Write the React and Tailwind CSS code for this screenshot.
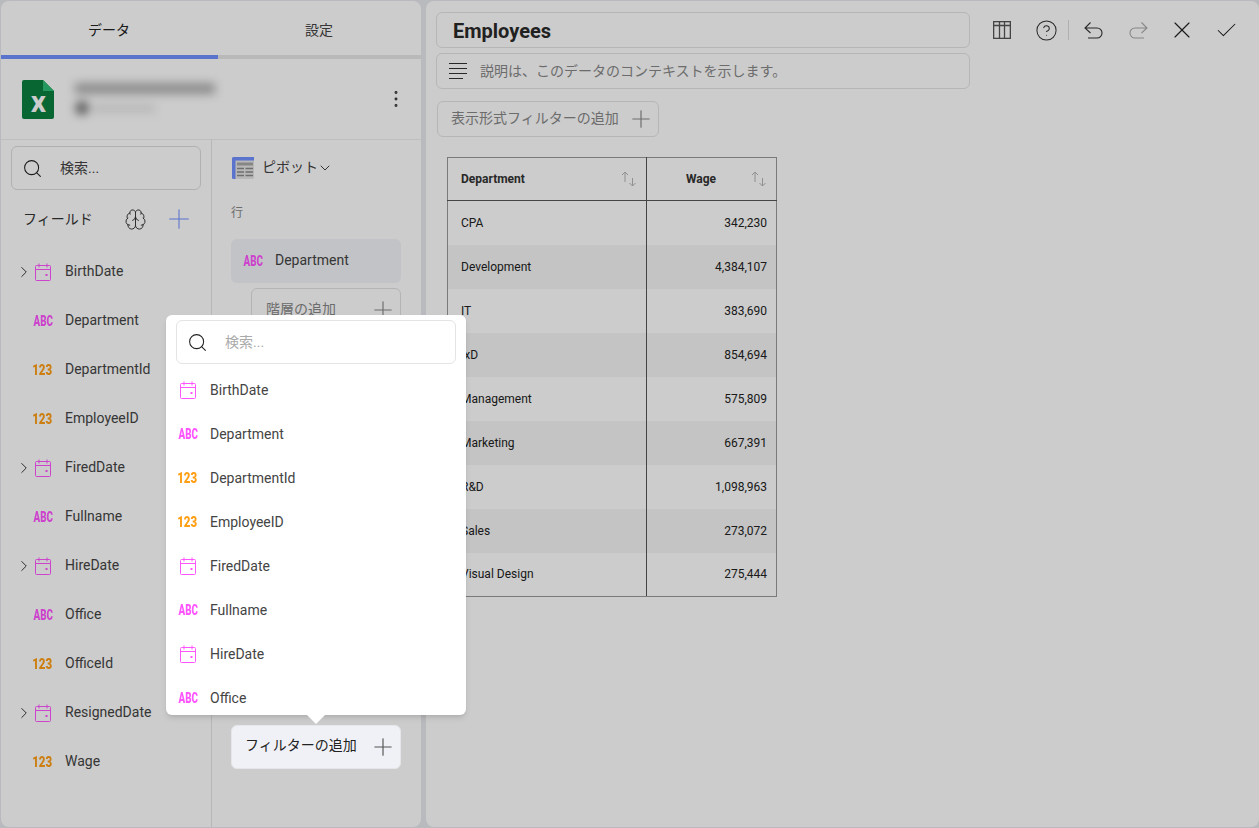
import React from 'react';
import { Search, Plus, ChevronRight, ChevronDown, X, Check, CircleHelp, EllipsisVertical, Brain } from 'lucide-react';

const fields = [
  { name: 'BirthDate', type: 'date' },
  { name: 'Department', type: 'abc' },
  { name: 'DepartmentId', type: 'num' },
  { name: 'EmployeeID', type: 'num' },
  { name: 'FiredDate', type: 'date' },
  { name: 'Fullname', type: 'abc' },
  { name: 'HireDate', type: 'date' },
  { name: 'Office', type: 'abc' },
  { name: 'OfficeId', type: 'num' },
  { name: 'ResignedDate', type: 'date' },
  { name: 'Wage', type: 'num' },
];

const rows = [
  ['CPA', '342,230'],
  ['Development', '4,384,107'],
  ['IT', '383,690'],
  ['IxD', '854,694'],
  ['Management', '575,809'],
  ['Marketing', '667,391'],
  ['R&D', '1,098,963'],
  ['Sales', '273,072'],
  ['Visual Design', '275,444'],
];

function CalendarIcon() {
  return (
    <svg width="18" height="18" viewBox="0 0 18 18" fill="none" stroke="#ff55ff" strokeWidth="1">
      <rect x="1.5" y="2.5" width="15" height="15" rx="1" />
      <path d="M1.5 6.5h15M5 0.5v4M13 0.5v4" />
      <rect x="11.5" y="11" width="2" height="2" fill="#ff55ff" stroke="none" />
    </svg>
  );
}

function TypeIcon({ type }) {
  if (type === 'date') return <CalendarIcon />;
  return (
    <span className={`inline-block w-[24px] -ml-[2px] text-center text-[14px] leading-none font-black ${type === 'abc' ? 'text-[#ff55ff] scale-x-[.7]' : 'text-[#ff9f14] scale-x-[.82]'}`}>
      {type === 'abc' ? 'ABC' : '123'}
    </span>
  );
}

function SortIcon() {
  return (
    <svg width="16" height="16" viewBox="0 0 16 16" fill="none" stroke="#b4b4b4" strokeWidth="1">
      <path d="M4 11V1M1 4L4 1L7 4M11.5 7v8M8.5 12L11.5 15L14.5 12" />
    </svg>
  );
}

function ExcelLogo() {
  return (
    <svg width="32" height="39" viewBox="0 0 32 39">
      <path d="M2 0H21L32 11V37a2 2 0 0 1-2 2H2a2 2 0 0 1-2-2V2a2 2 0 0 1 2-2z" fill="#0a8040" />
      <path d="M21 0L32 11H21z" fill="#2fbf78" />
      <text x="16.5" y="32" textAnchor="middle" fontSize="30" fontWeight="700" fill="#fff" fontFamily="Roboto, sans-serif">x</text>
    </svg>
  );
}

function PivotIcon() {
  return (
    <svg width="22" height="22" viewBox="0 0 22 22">
      <rect width="22" height="22" rx="1.5" fill="#e6e6e6" />
      <path d="M1.5 0H22V3.5H3.5V22H1.5A1.5 1.5 0 0 1 0 20.5V1.5A1.5 1.5 0 0 1 1.5 0z" fill="#7190ff" />
      <path d="M5 7h16" stroke="#a8a8a8" strokeWidth="3" />
      <path d="M5 11.5h7M13.5 11.5h7.5M5 15h7M13.5 15h7.5M5 18.5h7M13.5 18.5h7.5" stroke="#8a8a8a" strokeWidth="1.3" />
    </svg>
  );
}

function TableIcon() {
  return (
    <svg width="18" height="18" viewBox="0 0 18 18" fill="none" stroke="#555" strokeWidth="1.3">
      <rect x="0.65" y="0.65" width="16.7" height="16.7" />
      <path d="M0.5 4.5h17M6.5 0.5v17M11.5 0.5v17" />
    </svg>
  );
}

function UndoIcon({ flip, color }) {
  return (
    <svg width="20" height="20" viewBox="0 0 20 20" fill="none" stroke={color} strokeWidth="1.1" className={flip ? '-scale-x-100' : ''}>
      <path d="M1 8H13a5 5 0 0 1 0 10H4M6.5 2.5L1 8L6.5 13" />
    </svg>
  );
}

function Menu() {
  return (
    <svg width="18" height="16" viewBox="0 0 18 16" fill="none" stroke="#333" strokeWidth="1">
      <path d="M0 0.5h18M0 5.5h18M0 10.5h18M0 15.5h14" />
    </svg>
  );
}

function FieldList() {
  return (
    <div className="w-[211px] h-full border-r border-[#e5e5e5] flex flex-col shrink-0">
      <div className="px-[10px] pt-[6px]">
        <div className="h-[44px] border border-[#dedede] rounded-[6px] flex items-center pl-[10px]">
          <Search size={21} strokeWidth={1.2} color="#222" />
          <span className="ml-[17px] text-[14px] text-[#444]">検索...</span>
        </div>
      </div>
      <div className="h-[50px] flex items-center pl-[22px] mt-[4px]">
        <span className="text-[14px] text-[#333] w-[101px]">フィールド</span>
        <Brain size={23} strokeWidth={1} color="#333" />
        <Plus size={32} strokeWidth={0.8} color="#7190ff" className="ml-[16px]" />
      </div>
      <div className="flex flex-col mt-[3px]">
        {fields.map((f) => (
          <div key={f.name} className="h-[49px] flex items-center relative pl-[30px] text-[14px] text-[#444]">
            {f.type === 'date' && <ChevronRight size={18} strokeWidth={1.3} color="#333" className="absolute left-[14px]" />}
            <span className="w-[24px] flex justify-center"><TypeIcon type={f.type} /></span>
            <span className="ml-[10px]">{f.name}</span>
          </div>
        ))}
      </div>
    </div>
  );
}

function PivotColumn() {
  return (
    <div className="flex-1 h-full flex flex-col pl-[19px] pr-[20px]">
      <div className="h-[55px] flex items-center pl-[1px]">
        <PivotIcon />
        <span className="ml-[8px] text-[14px] text-[#444]">ピボット</span>
        <ChevronDown size={16} strokeWidth={1.4} color="#333" className="-ml-[1px] mt-[1px]" />
      </div>
      <div className="text-[12px] text-[#888] mt-[9px] leading-[18px]">行</div>
      <div className="mt-[17px] h-[44px] bg-[#f3f4f8] rounded-[6px] flex items-center pl-[11px] pb-[2px] text-[14px] text-[#444]">
        <span className="pt-[2px]"><TypeIcon type="abc" /></span>
        <span className="ml-[11px]">Department</span>
      </div>
      <div className="ml-[20px] mt-[5px] h-[44px] border border-[#e2e2e2] rounded-[6px] flex items-center justify-between pl-[14px] pr-[3px] text-[14px] text-[#888]">
        <span className="pb-[2px]">階層の追加</span>
        <Plus size={28} strokeWidth={1} color="#888" />
      </div>
      <div className="mt-auto mb-[58px] relative z-30 h-[44px] bg-[#f0f1f6] border border-[#e5e6ea] rounded-[6px] flex items-center justify-between pl-[13px] pr-[3px] text-[14px] text-[#222]">
        <span className="pb-[3px]">フィルターの追加</span>
        <Plus size={28} strokeWidth={1} color="#555" />
      </div>
    </div>
  );
}

function Popup() {
  return (
    <div className="absolute left-[166px] top-[315px] w-[300px] h-[400px] z-30 bg-white rounded-[6px] shadow-md">
      <div className="px-[10px] pt-[5px]">
        <div className="h-[44px] border border-[#e4e4e4] rounded-[6px] flex items-center pl-[10px]">
          <Search size={21} strokeWidth={1.2} color="#222" />
          <span className="ml-[17px] text-[14px] text-[#aaa]">検索...</span>
        </div>
      </div>
      <div className="h-[351px] overflow-hidden flex flex-col pt-[4px]">
        {fields.slice(0, 8).map((f) => (
          <div key={f.name} className="h-[44px] shrink-0 flex items-center pl-[10px] text-[14px] text-[#444]">
            <span className="w-[24px] flex justify-center"><TypeIcon type={f.type} /></span>
            <span className="ml-[10px]">{f.name}</span>
          </div>
        ))}
      </div>
      <div className="absolute left-[141px] top-[400px] w-0 h-0 border-x-[9px] border-x-transparent border-t-[9px] border-t-white" />
    </div>
  );
}

function DataTable() {
  return (
    <table className="ml-[21px] mt-[20px] w-[330px] border-collapse table-fixed text-[12px] text-[#222]">
      <thead>
        <tr className="h-[43px] font-bold text-[#333]">
          <th className="w-[199px] border border-[#999] border-b-[#555] border-r-[#555] pl-[13px] pr-[9px] font-bold">
            <div className="flex justify-between items-center"><span>Department</span><SortIcon /></div>
          </th>
          <th className="border border-[#999] border-b-[#555] pr-[9px] font-bold">
            <div className="flex justify-between items-center pl-[39px]"><span>Wage</span><SortIcon /></div>
          </th>
        </tr>
      </thead>
      <tbody>
        {rows.map((r, i) => (
          <tr key={r[0]} className={`h-[44px] ${i % 2 === 1 ? 'bg-[#f5f5f5]' : ''}`}>
            <td className={`border-l border-[#999] border-r border-r-[#555] pl-[13px] ${i === rows.length - 1 ? 'border-b border-b-[#999]' : ''}`}>{r[0]}</td>
            <td className={`border-r border-[#999] text-right pr-[9px] ${i === rows.length - 1 ? 'border-b border-b-[#999]' : ''}`}>{r[1]}</td>
          </tr>
        ))}
      </tbody>
    </table>
  );
}

function ToolButton({ children }) {
  return <div className="w-[44px] h-[36px] flex items-center justify-center">{children}</div>;
}

export default function App() {
  return (
    <div className="relative w-[1259px] h-[828px] overflow-hidden bg-[#e8e9ed] flex gap-[5px] p-[1px] pr-0 font-['Roboto','Noto_Sans_CJK_JP',sans-serif]">
      <div className="w-[420px] h-full bg-white rounded-[8px] flex flex-col overflow-hidden">
        <div className="flex h-[54px] text-[14px] pt-[5px]">
          <div className="w-[216px] flex items-center justify-center text-[#222]">データ</div>
          <div className="flex-1 flex items-center justify-center text-[#444]">設定</div>
        </div>
        <div className="flex h-[4px] bg-[#e8e8e8]">
          <div className="w-[217px] bg-[#7190ff]" />
        </div>
        <div className="h-[81px] shrink-0 border-b border-[#eeeeee] flex items-center pl-[21px] pr-[14px]">
          <ExcelLogo />
          <div className="ml-[21px] flex flex-col gap-[7px] blur-[5px]">
            <div className="w-[140px] h-[11px] bg-[#b0b0b0]" />
            <div className="flex items-center gap-[4px]">
              <div className="w-[14px] h-[14px] rounded-full bg-[#777]" />
              <div className="w-[62px] h-[7px] bg-[#e2e2e2]" />
            </div>
          </div>
          <EllipsisVertical size={22} strokeWidth={1.2} color="#333" className="ml-auto" />
        </div>
        <div className="flex flex-1 min-h-0">
          <FieldList />
          <PivotColumn />
        </div>
      </div>

      <div className="flex-1 h-full bg-white rounded-[8px] flex flex-col">
        <div className="flex pt-[11px] pl-[10px]">
          <div className="w-[534px] flex flex-col gap-[5px]">
            <div className="h-[36px] border border-[#e4e4e4] rounded-[6px] flex items-center pl-[16px] pt-[2px] text-[20px] font-bold text-[#2a2a2a]">Employees</div>
            <div className="h-[36px] border border-[#e4e4e4] rounded-[6px] flex items-center pl-[12px] text-[14px] text-[#888]">
              <Menu />
              <span className="ml-[13px]">説明は、このデータのコンテキストを示します。</span>
            </div>
          </div>
          <div className="flex items-center h-[36px] pl-[10px]">
            <ToolButton><TableIcon /></ToolButton>
            <ToolButton><CircleHelp size={23} strokeWidth={1.05} color="#333" /></ToolButton>
            <div className="w-px h-[20px] bg-[#ddd] mr-[3px]" />
            <ToolButton><UndoIcon color="#333" /></ToolButton>
            <ToolButton><UndoIcon flip color="#aaa" /></ToolButton>
            <ToolButton><X size={28} strokeWidth={1} color="#222" /></ToolButton>
            <ToolButton><Check size={25} strokeWidth={1} color="#222" /></ToolButton>
          </div>
        </div>
        <div className="ml-[11px] mt-[12px] w-[222px] h-[36px] border border-[#e4e4e4] rounded-[6px] flex items-center justify-between pl-[13px] pr-[3px] text-[14px] text-[#888]">
          <span className="pb-[2px]">表示形式フィルターの追加</span>
          <Plus size={28} strokeWidth={1} color="#888" />
        </div>
        <DataTable />
      </div>

      <div className="absolute inset-0 z-20 bg-black/20" />
      <Popup />
    </div>
  );
}
